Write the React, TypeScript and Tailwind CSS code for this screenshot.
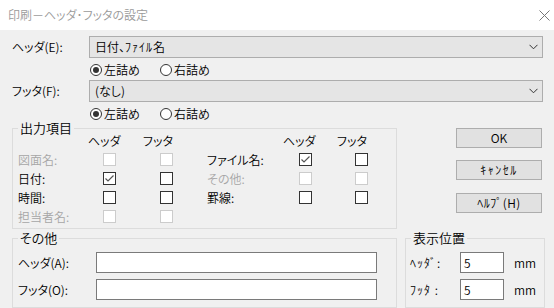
import React from "react";

function CB({ checked = false, disabled = false }: { checked?: boolean; disabled?: boolean }) {
  return (
    <div
      className={
        "w-[13px] h-[13px] shrink-0 border bg-white flex items-center justify-center " +
        (disabled ? "border-[#cccccc]" : "border-[#333333]")
      }
    >
      {checked && (
        <svg width="11" height="11" viewBox="0 0 11 11">
          <polyline points="1.5,5.5 4,8 9.5,2.5" fill="none" stroke="#555" strokeWidth="1.2" />
        </svg>
      )}
    </div>
  );
}

function Radio({ checked = false }: { checked?: boolean }) {
  return (
    <div className="w-[12px] h-[12px] shrink-0 rounded-full border border-[#333333] bg-white flex items-center justify-center">
      {checked && <div className="w-[6px] h-[6px] rounded-full bg-[#333333]" />}
    </div>
  );
}

function Chevron() {
  return (
    <svg width="9" height="6" viewBox="0 0 9 6" className="shrink-0">
      <polyline points="0.5,0.8 4.5,4.8 8.5,0.8" fill="none" stroke="#333" strokeWidth="1" />
    </svg>
  );
}

function Combo({ label, value }: { label: string; value: React.ReactNode }) {
  return (
    <div className="flex items-center h-[22px] pl-[12px] pr-[11px]">
      <div className="w-[77px] shrink-0">{label}</div>
      <div className="flex-1 h-full border border-[#adadad] bg-[#e5e5e5] flex items-center pl-[5px] pr-[4px]">
        <div className="flex-1">{value}</div>
        <Chevron />
      </div>
    </div>
  );
}

function RadioRow() {
  return (
    <div className="flex items-center h-[14px] pl-[90px]">
      <div className="flex items-center w-[70px] gap-[2px]">
        <Radio checked />
        <span>左詰め</span>
      </div>
      <div className="flex items-center gap-[2px]">
        <Radio />
        <span>右詰め</span>
      </div>
    </div>
  );
}

type RowDef = {
  l: string;
  ld?: boolean;
  lh?: boolean;
  r?: string;
  rd?: boolean;
  rh?: boolean;
};

const rows: RowDef[] = [
  { l: "図面名:", ld: true, r: "ファイル名:", rh: true },
  { l: "日付:", lh: true, r: "その他:", rd: true },
  { l: "時間:", r: "罫線:" },
  { l: "担当者名:", ld: true },
];

export default function App() {
  return (
    <div className="w-[554px] h-[308px] overflow-hidden bg-[#f0f0f0] text-[12px] leading-[14px] text-black font-['Noto_Sans_CJK_JP',sans-serif] font-[350] [font-feature-settings:'palt']">
      {/* title bar */}
      <div className="h-[30px] bg-white flex items-center justify-between pl-[8px] pr-[4px]">
        <span className="text-[#9a9a9a]">印刷－ヘッダ･フッタの設定</span>
        <svg width="11" height="11" viewBox="0 0 11 11">
          <path d="M0.5 0.5 L10.5 10.5 M10.5 0.5 L0.5 10.5" stroke="#777" strokeWidth="1" />
        </svg>
      </div>

      <div className="pt-[6px]">
        <Combo
          label="ヘッダ(E):"
          value={
            <span>
              日付、<span className="tracking-[1px]">ﾌｧｲﾙ</span>名
            </span>
          }
        />
        <div className="mt-[5px]">
          <RadioRow />
        </div>
        <div className="mt-[3px]">
          <Combo label="フッタ(F):" value="(なし)" />
        </div>
        <div className="mt-[5px]">
          <RadioRow />
        </div>

        {/* main area */}
        <div className="flex pl-[12px] mt-[-1px]">
          <fieldset className="w-[385px] h-[109px] border border-[#dcdcdc] shrink-0">
            <legend className="ml-[5px] px-[2px] text-[13px] leading-[16px]">出力項目</legend>
            <div className="flex items-center h-[10px]">
              <span className="ml-[75px] w-[55px]">ヘッダ</span>
              <span className="w-[140px]">フッタ</span>
              <span className="w-[54px]">ヘッダ</span>
              <span>フッタ</span>
            </div>
            <div className="mt-[4px]">
              {rows.map((r, i) => (
                <div key={i} className="flex items-center h-[19px] pl-[5px]">
                  <div className={"w-[85px] shrink-0 " + (r.ld ? "text-[#a6a6a6]" : "")}>{r.l}</div>
                  <CB checked={r.lh} disabled={r.ld} />
                  <div className="w-[44px] shrink-0" />
                  <CB disabled={r.ld} />
                  <div className="w-[34px] shrink-0" />
                  {r.r && (
                    <>
                      <div className={"w-[92px] shrink-0 " + (r.rd ? "text-[#a6a6a6]" : "")}>{r.r}</div>
                      <CB checked={r.rh} disabled={r.rd} />
                      <div className="w-[43px] shrink-0" />
                      <CB disabled={r.rd} />
                    </>
                  )}
                </div>
              ))}
            </div>
          </fieldset>
          <div className="ml-[59px] w-[86px] flex flex-col pt-[8px]">
            <button className="h-[20px] border border-[#adadad] bg-[#e1e1e1] flex items-center justify-center">OK</button>
            <button className="mt-[12px] h-[20px] border border-[#adadad] bg-[#e1e1e1] flex items-center justify-center tracking-[1.5px]">ｷｬﾝｾﾙ</button>
            <button className="mt-[13px] h-[20px] border border-[#adadad] bg-[#e1e1e1] flex items-center justify-center tracking-[0.5px]">ﾍﾙﾌﾟ(H)</button>
          </div>
        </div>

        {/* bottom area */}
        <div className="flex pl-[12px] mt-[1px]">
          <fieldset className="w-[385px] h-[78px] border border-[#dcdcdc] shrink-0">
            <legend className="ml-[5px] px-[2px] text-[13px] leading-[16px]">その他</legend>
            <div className="flex items-center pl-[5px] mt-[6px]">
              <div className="w-[78px] shrink-0">ヘッダ(A):</div>
              <div className="w-[281px] h-[21px] border border-[#7a7a7a] bg-white" />
            </div>
            <div className="flex items-center pl-[5px] mt-[6px]">
              <div className="w-[78px] shrink-0">フッタ(O):</div>
              <div className="w-[281px] h-[21px] border border-[#7a7a7a] bg-white" />
            </div>
          </fieldset>
          <fieldset className="ml-[8px] w-[140px] h-[78px] border border-[#dcdcdc] shrink-0">
            <legend className="ml-[5px] px-[2px] text-[13px] leading-[16px]">表示位置</legend>
            <div className="flex items-center pl-[4px] mt-[6px]">
              <div className="w-[50px] shrink-0 tracking-[1px]">ﾍｯﾀﾞ:</div>
              <div className="w-[44px] h-[21px] border border-[#7a7a7a] bg-white flex items-center pl-[3px]">5</div>
              <div className="ml-[10px]">mm</div>
            </div>
            <div className="flex items-center pl-[4px] mt-[6px]">
              <div className="w-[50px] shrink-0 tracking-[1px]">ﾌｯﾀ :</div>
              <div className="w-[44px] h-[21px] border border-[#7a7a7a] bg-white flex items-center pl-[3px]">5</div>
              <div className="ml-[10px]">mm</div>
            </div>
          </fieldset>
        </div>
      </div>
    </div>
  );
}
